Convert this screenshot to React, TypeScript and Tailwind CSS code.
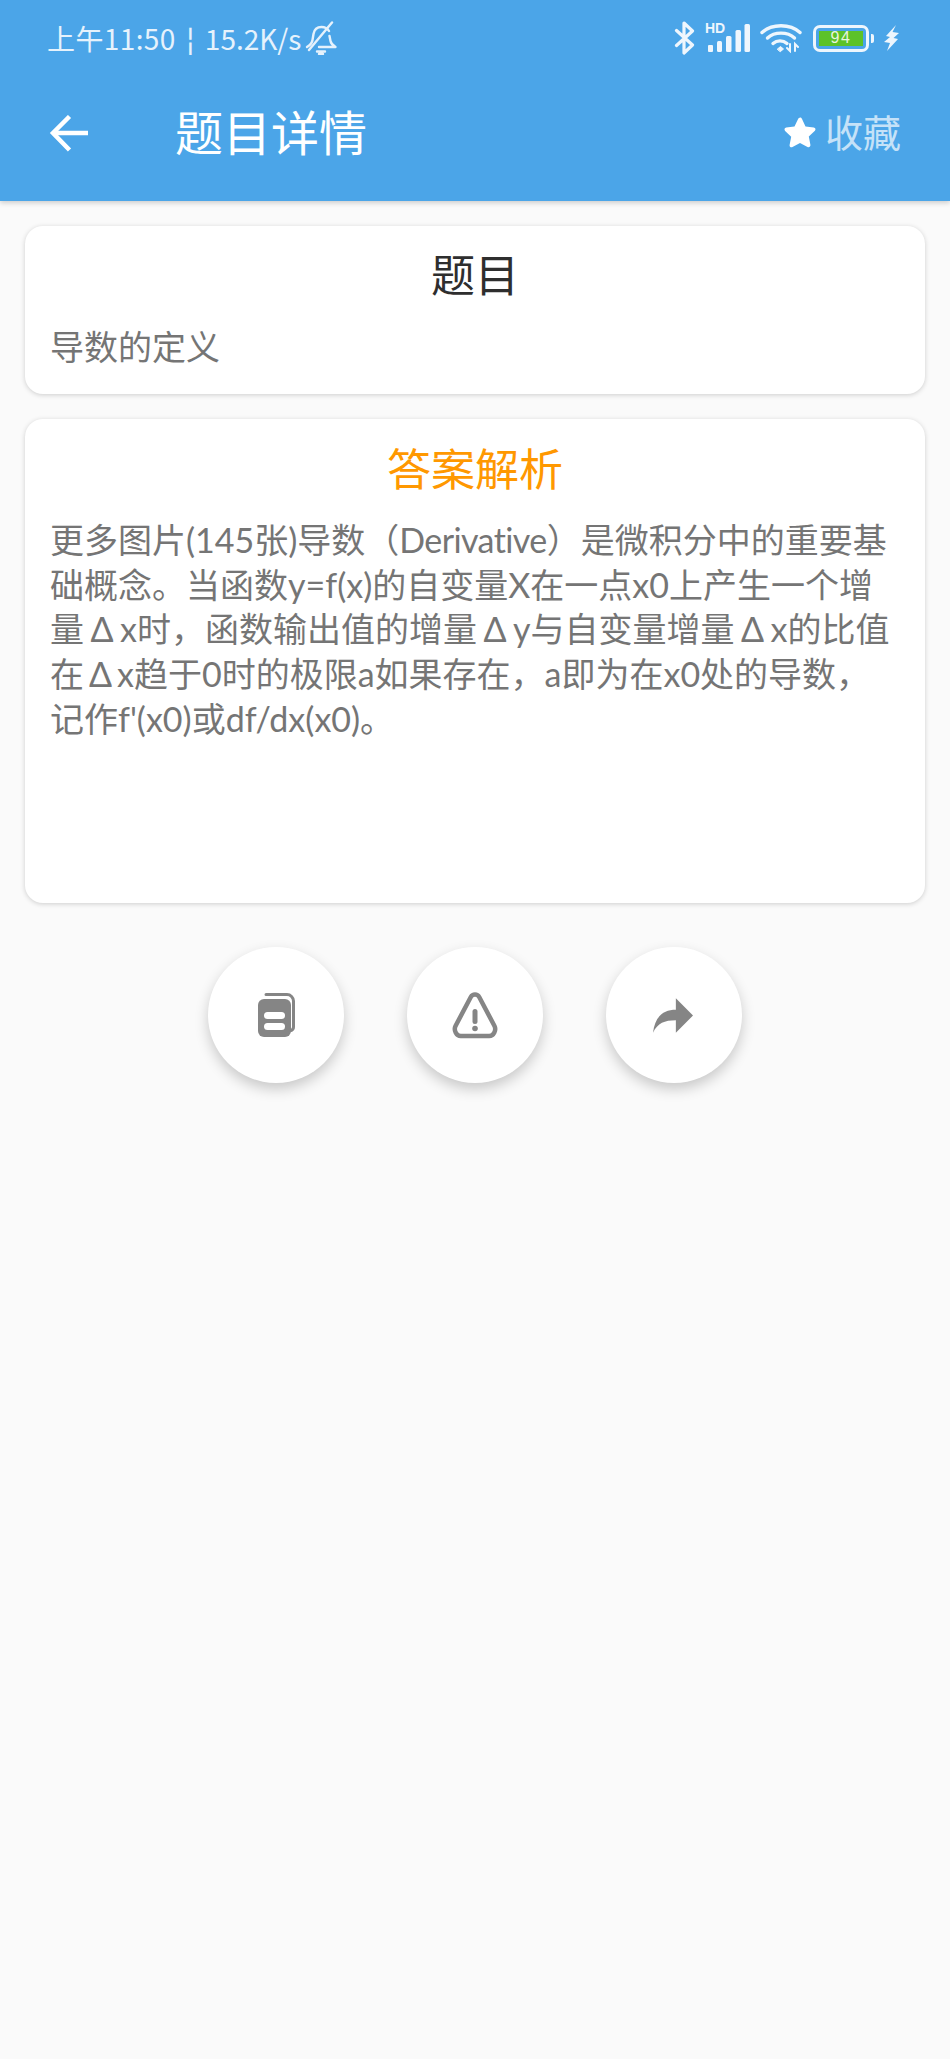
import React from "react";

const font = { fontFamily: '"Noto Sans CJK SC", "Noto Sans", sans-serif' };
const bodyFont = { fontFamily: 'Lato, "Noto Sans CJK SC", sans-serif' };

const BellOff = () => (
  <svg width="32" height="34" viewBox="0 0 32 34" fill="none" stroke="#e6f2fc" strokeWidth="2.4" strokeLinecap="round" strokeLinejoin="round" className="ml-[4px] shrink-0">
    <path d="M2 26c3-2 5-3 5.500-7l1-6c.8-4.500 4-7 8-7 3.500 0 6 1.500 7.500 4" />
    <path d="M24.500 15l1 5c.5 2.500 2.500 4.500 5 6H14" />
    <path d="M27 1.500 4 29" />
    <path d="M12 30.500h8M14 33h4" />
  </svg>
);

const Bluetooth = () => (
  <svg width="22" height="34" viewBox="0 0 22 34" fill="none" stroke="#eef6fd" strokeWidth="3.200" strokeLinecap="round" strokeLinejoin="round">
    <path d="M2.500 9.500 18.500 24 10 32V2l8.500 8L2.500 24.500" />
  </svg>
);

const Signal = () => (
  <div className="relative w-[45px] h-[30px] ml-[9px]">
    <span className="absolute left-0 top-[-2px] text-[14px] leading-[14px] font-bold text-[#eef6fd]" style={{ fontFamily: '"Liberation Sans", sans-serif' }}>HD</span>
    <svg width="45" height="30" viewBox="0 0 45 30" fill="#eef6fd" className="absolute inset-0">
      <rect x="3" y="22" width="5" height="7" rx="1" />
      <rect x="12" y="18" width="5" height="11" rx="1.500" />
      <rect x="21" y="13" width="5.500" height="16" rx="1.500" />
      <rect x="30.500" y="7" width="5.500" height="22" rx="1.500" />
      <rect x="39.500" y="1" width="5.500" height="28" rx="1.500" />
    </svg>
  </div>
);

const Wifi = () => (
  <svg width="42" height="30" viewBox="0 0 42 30" fill="none" stroke="#eef6fd" strokeWidth="3.400" strokeLinecap="round" className="ml-[10px]">
    <path d="M2 9.500C12 .5 30 .5 40 9.500" />
    <path d="M7.500 15C14.500 8.500 27.500 8.500 34.500 15" />
    <path d="M13 20.500c4-3.500 10-3.500 14 0" />
    <path d="M17.500 26l3-2.500 3 2.500-3 2.500z" fill="#eef6fd" strokeWidth="1" />
    <path d="M30 21v7l-3-3M35 28v-7l3 3" strokeWidth="2" fill="none" />
  </svg>
);

const Battery = () => (
  <div className="flex items-center ml-[11px]">
    <div className="w-[56px] h-[27px] rounded-[7px] border-[3px] border-[#eef6fd] p-[3px] box-border">
      <div className="h-full bg-[#5cc228] flex items-center justify-center text-[16px] leading-none tracking-[1.500px] text-[#e8f5de]" style={{ fontFamily: '"Liberation Sans", sans-serif' }}>94</div>
    </div>
    <div className="w-[3px] h-[9px] rounded-r-[2px] bg-[#eef6fd] ml-[2px]" />
  </div>
);

const Bolt = () => (
  <svg width="15" height="26" viewBox="0 0 15 26" fill="#eef6fd" className="ml-[10px]">
    <path d="M12 0 2 11l4 1-6 5 6 1-3 8 11-12-4.500-1L15 8 8.500 7z" />
  </svg>
);

const ArrowBack = () => (
  <svg width="40" height="40" viewBox="0 0 40 40" fill="none" stroke="#fff" strokeWidth="4.500" strokeLinejoin="miter" className="mt-[7px]">
    <path d="M40 18H5" />
    <path d="M21.500 1.500 5 18l16.500 17" />
  </svg>
);

const Star = () => (
  <svg width="34" height="33" viewBox="0 0 34 33" fill="#fff" className="mt-[3px]">
    <path d="M17 1.500c.9 0 1.500.5 1.900 1.300l3.600 7.600 8.300 1c1.600.2 2.300 2.200 1.100 3.300l-6.100 5.800 1.600 8.300c.3 1.700-1.400 2.900-2.900 2.100L17 27l-7.500 4.100c-1.500.8-3.200-.4-2.900-2.100l1.600-8.300-6.100-5.800c-1.200-1.100-.5-3.100 1.100-3.300l8.300-1 3.600-7.600c.4-.8 1-1.300 1.900-1.300z" />
  </svg>
);

const CopyIcon = () => (
  <svg width="37" height="44" viewBox="0 0 37 44" fill="none">
    <path d="M8 1.500h21c3.500 0 6.500 3 6.500 6.500v26c0 1.500-1 3-2.500 3.500" stroke="#858585" strokeWidth="3" strokeLinecap="round" />
    <rect x="0" y="6" width="33" height="38" rx="6" fill="#858585" />
    <rect x="6" y="19" width="21" height="7" rx="3.500" fill="#fff" />
    <rect x="6" y="30" width="21" height="7" rx="3.500" fill="#fff" />
  </svg>
);

const WarnIcon = () => (
  <svg width="46" height="47" viewBox="0 0 46 47" fill="none">
    <path d="M18.800 5c1.900-3.400 6.500-3.400 8.400 0l15.300 29c2 4-.7 10-5.200 10H8.700c-4.500 0-7.200-6-5.200-10z" stroke="#858585" strokeWidth="4.500" strokeLinejoin="round" />
    <rect x="20.500" y="17" width="5" height="15" rx="2.500" fill="#858585" />
    <circle cx="23" cy="36.500" r="2.800" fill="#858585" />
  </svg>
);

const ShareIcon = () => (
  <svg width="40" height="35" viewBox="0 0 42 36" fill="#858585" className="ml-[-2px]">
    <path d="M24 0v12C11 12 2 19 0 36c5-10 12-13 24-13v13L42 18z" />
  </svg>
);

const CircleButton = ({ children }: { children: React.ReactNode }) => (
  <button className="w-[136px] h-[136px] rounded-full bg-white flex items-center justify-center shadow-[0_6px_14px_rgba(0,0,0,0.2)]">
    {children}
  </button>
);

const D = () => <span className="inline-block w-[36px] text-center">Δ</span>;

export default function App() {
  return (
    <div className="w-[950px] h-[2059px] bg-[#fafafa] overflow-hidden" style={font}>
      <header className="bg-[#4ba5e8] h-[201px] shadow-[0_2px_5px_rgba(0,0,0,0.18)] relative">
        <div className="h-[76px] flex items-center justify-between pl-[47px] pr-[51px]">
          <div className="flex items-center text-[#e6f2fc] text-[28px] leading-none">
            <span className="tracking-[0.4px]">上午11:50</span>
            <span className="mx-[11px] text-[24px] font-bold">¦</span>
            <span>15.2K/s</span>
            <BellOff />
          </div>
          <div className="flex items-center">
            <Bluetooth />
            <Signal />
            <Wifi />
            <Battery />
            <Bolt />
          </div>
        </div>
        <div className="h-[110px] flex items-center pl-[48px] pr-[49px]">
          <ArrowBack />
          <h1 className="ml-[87px] mb-[3px] text-[48px] leading-none text-white font-normal">题目详情</h1>
          <div className="ml-auto flex items-center">
            <Star />
            <span className="ml-[8px] text-[38px] leading-none text-[#c5e2f8]">收藏</span>
          </div>
        </div>
      </header>

      <main className="pt-[25px] px-[25px]">
        <section className="h-[168px] bg-white rounded-[18px] shadow-[0_1px_5px_rgba(0,0,0,0.18)] px-[25px] pt-[18px]">
          <h2 className="text-center text-[44px] leading-[58px] font-normal text-[#2e2e2e]">题目</h2>
          <p className="mt-[21px] text-[34px] leading-[45px] text-[#757575]">导数的定义</p>
        </section>

        <section className="mt-[25px] h-[484px] bg-white rounded-[18px] shadow-[0_1px_5px_rgba(0,0,0,0.18)] px-[25px] pt-[19px]">
          <h2 className="text-center text-[44px] leading-[58px] font-normal text-[#ff9800]">答案解析</h2>
          <div className="mt-[22px] text-[34px] leading-[44.700px] text-[#757575] whitespace-nowrap" style={bodyFont}>
            <div>更多图片(145张)导数（<span className="tracking-[-0.6px]">Derivative</span>）是微积分中的重要基</div>
            <div>础概念。当函数y=f(x)的自变量X在一点x0上产生一个增</div>
            <div>量<D />x时，函数输出值的增量<D />y与自变量增量<D />x的比值</div>
            <div>在<span className="inline-block w-[33px] text-center">Δ</span>x趋于0时的极限a如果存在，a即为在x0处的导数，</div>
            <div>记作f'(x0)或df/dx(x0)。</div>
          </div>
        </section>

        <div className="mt-[44px] flex justify-center gap-[63px]">
          <CircleButton><CopyIcon /></CircleButton>
          <CircleButton><WarnIcon /></CircleButton>
          <CircleButton><ShareIcon /></CircleButton>
        </div>
      </main>
    </div>
  );
}
